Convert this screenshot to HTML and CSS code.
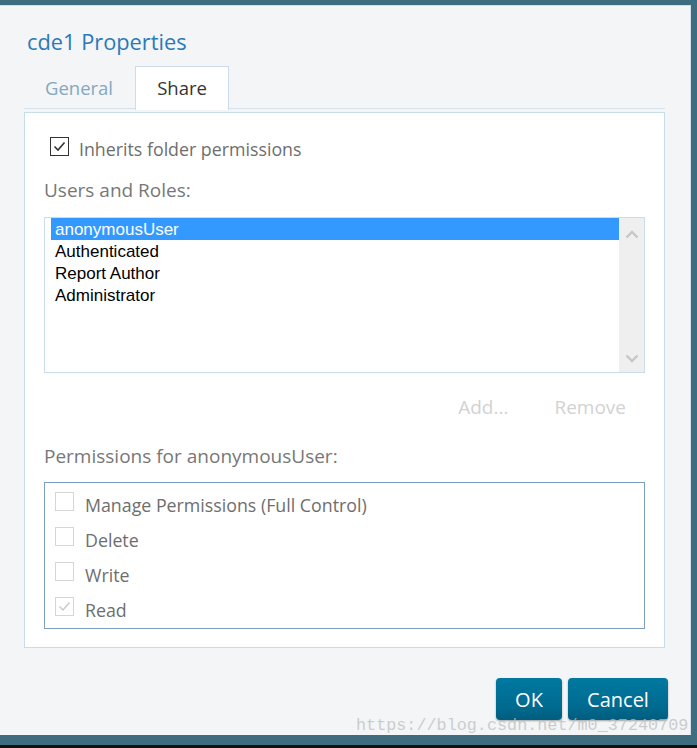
FILE: index.html
```html
<!DOCTYPE html>
<html>
<head>
<meta charset="utf-8">
<link rel="stylesheet" href="styles.css">
</head>
<body>
<div class="screen">
  <div class="dialog">
    <h1 class="title">cde1 Properties</h1>
    <div class="tabs">
      <div class="tab">General</div>
      <div class="tab active">Share</div>
    </div>
    <div class="panel">
      <label class="inherit">
        <span class="cb cb-dark">
          <svg width="19" height="19" viewBox="0 0 19 19"><polyline points="4.5,9.5 8,13 14.5,5.5" fill="none" stroke="#333" stroke-width="1.6"/></svg>
        </span>
        <span class="txt">Inherits folder permissions</span>
      </label>
      <div class="label users-label">Users and Roles:</div>
      <div class="listbox">
        <div class="items">
          <div class="item selected">anonymousUser</div>
          <div class="item">Authenticated</div>
          <div class="item">Report Author</div>
          <div class="item">Administrator</div>
        </div>
        <div class="scrollbar">
          <svg width="14" height="9" viewBox="0 0 14 9"><polyline points="1.5,7.5 7,2 12.5,7.5" fill="none" stroke="#c6c6c6" stroke-width="2.4"/></svg>
          <svg width="14" height="9" viewBox="0 0 14 9"><polyline points="1.5,1.5 7,7 12.5,1.5" fill="none" stroke="#c6c6c6" stroke-width="2.4"/></svg>
        </div>
      </div>
      <div class="actions">
        <span class="link-btn">Add...</span>
        <span class="link-btn">Remove</span>
      </div>
      <div class="label perm-label">Permissions for anonymousUser:</div>
      <div class="perms">
        <div class="perm"><span class="cb cb-light"></span><span class="txt">Manage Permissions (Full Control)</span></div>
        <div class="perm"><span class="cb cb-light"></span><span class="txt">Delete</span></div>
        <div class="perm"><span class="cb cb-light"></span><span class="txt">Write</span></div>
        <div class="perm"><span class="cb cb-light">
          <svg width="19" height="19" viewBox="0 0 19 19"><polyline points="4.5,9.5 8,13 14.5,5.5" fill="none" stroke="#c8c8c8" stroke-width="1.4"/></svg>
        </span><span class="txt">Read</span></div>
      </div>
    </div>
    <div class="footer">
      <button class="btn ok">OK</button>
      <button class="btn cancel">Cancel</button>
    </div>
  </div>
  <div class="blackbar"></div>
  <div class="watermark">https://blog.csdn.net/m0_37240709</div>
</div>
</body>
</html>
```

FILE: styles.css
```css
* { box-sizing: border-box; }
html, body { margin: 0; padding: 0; }
body {
  width: 697px;
  height: 748px;
  overflow: hidden;
  font-family: "Open Sans", "Liberation Sans", sans-serif;
}
.screen {
  position: relative;
  width: 697px;
  height: 748px;
  background: #3f6d80;
  padding-top: 5px;
}
.dialog {
  width: 691px;
  height: 730px;
  background: #f3f5f7;
  border-top: 1px solid #d3dee8;
  border-right: 1px solid #d3dee8;
  display: flex;
  flex-direction: column;
}
.title {
  margin: 0;
  padding: 22px 0 0 27px;
  font-size: 21.8px;
  line-height: 28px;
  font-weight: 400;
  color: #2b79b8;
}
.tabs {
  display: flex;
  margin: 10px 0 0 24px;
  width: 641px;
  height: 43px;
  border-bottom: 1px solid #d5e2ec;
}
.tab {
  height: 43px;
  font-size: 18.5px;
  line-height: 44px;
  color: #84a8c1;
  width: 110px;
  text-align: center;
}
.tab.active {
  width: 94px;
  margin-left: 1px;
  height: 44px;
  line-height: 42px;
  background: #fff;
  color: #333;
  border: 1px solid #cddcea;
  border-bottom: none;
}
.panel {
  margin: 3px 0 0 24px;
  width: 641px;
  height: 536px;
  background: #fff;
  border: 1px solid #c9dcea;
  padding: 0 19px;
  display: flex;
  flex-direction: column;
}
.cb {
  width: 19px;
  height: 19px;
  flex: none;
  display: block;
}
.cb svg { display: block; margin: -1px; }
.cb-dark { border: 1px solid #333; }
.cb-light { border: 1px solid #d6d6d6; }
.inherit {
  display: flex;
  align-items: flex-start;
  gap: 10px;
  margin: 24px 0 0 6px;
  font-size: 17.8px;
  line-height: 24px;
  color: #6e6e6e;
  height: 24px;
}
.label {
  font-size: 19px;
  color: #777;
  line-height: 26px;
}
.users-label { margin-top: 16px; }
.listbox {
  margin-top: 14px;
  height: 156px;
  flex: none;
  border: 1px solid #c9dcea;
  display: flex;
}
.items {
  flex: 1;
  padding: 0 0 0 6px;
  font-family: "Liberation Sans", Arial, sans-serif;
  font-size: 17px;
  color: #000;
}
.item {
  height: 22px;
  line-height: 20px;
  padding: 2px 0 0 4px;
}
.item.selected {
  background: #3399ff;
  color: #fff;
}
.scrollbar {
  width: 25px;
  background: #efefef;
  display: flex;
  flex-direction: column;
  justify-content: space-between;
  align-items: center;
  padding: 12px 0 9px;
}
.scrollbar svg { display: block; }
.actions {
  display: flex;
  justify-content: flex-end;
  margin-top: 21px;
  height: 26px;
}
.link-btn {
  font-size: 19px;
  color: #d2d2d2;
  line-height: 26px;
  padding: 0 23px;
}
.link-btn:last-child { padding-right: 19px; }
.perm-label { margin-top: 23px; }
.perms {
  margin-top: 13px;
  height: 147px;
  flex: none;
  border: 1px solid #7c9fbf;
  padding: 0 0 0 10px;
}
.perm {
  display: flex;
  align-items: flex-start;
  gap: 11px;
  height: 35px;
  font-size: 17.8px;
  line-height: 24px;
  color: #6e6e6e;
}
.perm .cb { margin-top: 9px; }
.perm .txt { margin-top: 10px; }
.footer {
  display: flex;
  justify-content: flex-end;
  gap: 6px;
  padding: 30px 22px 0 0;
}
.btn {
  height: 42px;
  border: none;
  border-radius: 4px;
  background: linear-gradient(#0079a0, #006a8f 70%, #005d7e);
  color: #fff;
  font-family: "Open Sans", "Liberation Sans", sans-serif;
  font-size: 20px;
  box-shadow: 0 1px 2px rgba(0,0,0,0.35);
  padding: 0;
}
.ok { width: 66px; }
.cancel { width: 100px; }
.blackbar {
  position: absolute;
  left: 0;
  bottom: 0;
  width: 697px;
  height: 3px;
  background: #111;
}
.watermark {
  position: absolute;
  left: 356px;
  top: 716px;
  font-family: "Liberation Mono", "DejaVu Sans Mono", monospace;
  font-size: 16.8px;
  line-height: 20px;
  color: rgba(190,190,190,0.75);
  white-space: nowrap;
}
```
